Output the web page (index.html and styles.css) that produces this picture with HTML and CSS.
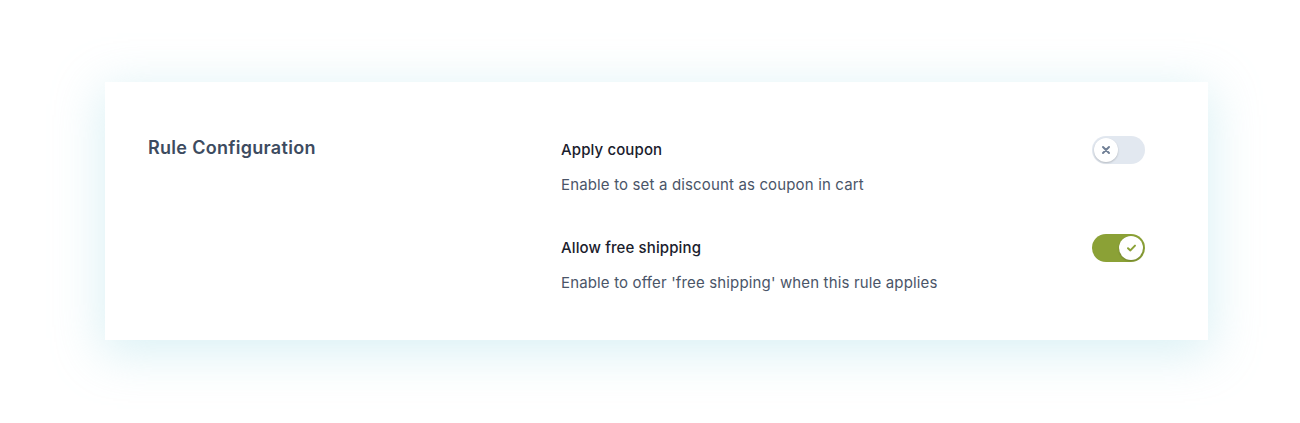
FILE: index.html
```html
<!DOCTYPE html>
<html lang="en">
<head>
<meta charset="utf-8">
<title>Rule Configuration</title>
<link rel="stylesheet" href="styles.css">
</head>
<body>
<div class="page">
  <section class="card">
    <h2 class="card-title">Rule Configuration</h2>
    <div class="settings">
      <div class="setting">
        <div class="setting-text">
          <div class="setting-label">Apply coupon</div>
          <div class="setting-desc">Enable to set a discount as coupon in cart</div>
        </div>
        <span class="toggle">
          <span class="knob">
            <svg width="10" height="10" viewBox="0 0 10 10"><path d="M2 2 L8 8 M8 2 L2 8" stroke="#718096" stroke-width="2" stroke-linecap="round" fill="none"/></svg>
          </span>
        </span>
      </div>
      <div class="setting">
        <div class="setting-text">
          <div class="setting-label">Allow free shipping</div>
          <div class="setting-desc">Enable to offer 'free shipping' when this rule applies</div>
        </div>
        <span class="toggle on">
          <span class="knob">
            <svg width="11" height="10" viewBox="0 0 11 10"><path d="M2 5.2 L4.4 7.4 L9 2.6" stroke="#8ba136" stroke-width="2" stroke-linecap="round" stroke-linejoin="round" fill="none"/></svg>
          </span>
        </span>
      </div>
    </div>
  </section>
</div>
</body>
</html>
```

FILE: styles.css
```css
* { box-sizing: border-box; }
html, body { margin: 0; padding: 0; background: #ffffff; }
body {
  font-family: Inter, "Noto Sans", "Liberation Sans", sans-serif;
  -webkit-font-smoothing: antialiased;
  min-height: 423px;
}
.page {
  padding: 82px 92px 83px 105px;
}
.card {
  background: #ffffff;
  box-shadow: 0 10px 45px 4px rgba(170, 222, 232, 0.42);
  display: grid;
  grid-template-columns: 413px 1fr;
  padding: 54px 63px 45px 43px;
  min-height: 258px;
}
.card-title {
  margin: -2px 0 0;
  font-size: 18px;
  line-height: 28px;
  font-weight: 600;
  letter-spacing: 0.3px;
  color: #3d4b60;
}
.settings {
  display: flex;
  flex-direction: column;
  gap: 39px;
  padding-top: 2px;
}
.setting {
  display: flex;
  justify-content: space-between;
  align-items: flex-start;
}
.setting-text {
  display: flex;
  flex-direction: column;
  gap: 11px;
}
.setting-label {
  font-size: 15px;
  line-height: 24px;
  font-weight: 500;
  letter-spacing: 0.12px;
  color: #1a202c;
}
.setting-desc {
  font-size: 15px;
  line-height: 24px;
  font-weight: 400;
  letter-spacing: 0.15px;
  color: #4a5568;
}
.toggle {
  width: 53px;
  height: 28px;
  border-radius: 14px;
  background: #e2e8f0;
  display: flex;
  align-items: center;
  padding: 2px;
  margin-top: -2px;
}
.toggle.on {
  background: #8ba136;
  justify-content: flex-end;
}
.knob {
  width: 24px;
  height: 24px;
  border-radius: 50%;
  background: #ffffff;
  box-shadow: 0 1px 2px rgba(0, 0, 0, 0.2);
  display: flex;
  align-items: center;
  justify-content: center;
}
```
